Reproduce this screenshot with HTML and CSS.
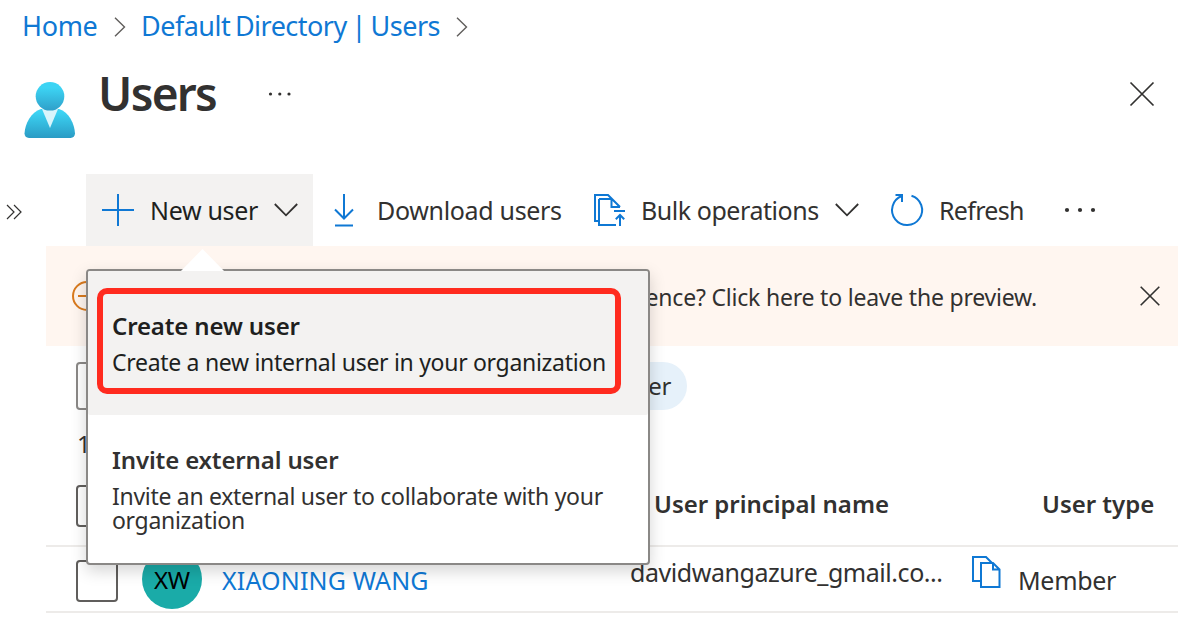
FILE: index.html
```html
<!DOCTYPE html>
<html lang="en">
<head>
<meta charset="utf-8">
<title>Users</title>
<link rel="stylesheet" href="styles.css">
</head>
<body>
<div class="page">
  <nav class="crumbs">
    <a class="crumb-home">Home</a>
    <svg class="crumb-sep" width="12" height="20" viewBox="0 0 12 20"><path d="M1 .7 10.500 10 1 19.300"/></svg>
    <a class="crumb-dir">Default Directory | Users</a>
    <svg class="crumb-sep" width="12" height="20" viewBox="0 0 12 20"><path d="M1 .7 10.500 10 1 19.300"/></svg>
  </nav>

  <header class="title-bar">
    <svg class="avatar-icon" width="52" height="57" viewBox="0 0 52 57">
      <defs>
        <linearGradient id="body" x1="0" y1="0" x2="0" y2="1"><stop offset=".1" stop-color="#3cd4f4"/><stop offset="1" stop-color="#2a9bc4"/></linearGradient>
        <linearGradient id="head" x1="0" y1="0" x2="0" y2="1"><stop offset=".2" stop-color="#3cd4f4"/><stop offset="1" stop-color="#2f9fc9"/></linearGradient>
      </defs>
      <path fill="url(#body)" d="M5 56Q.7 55.500 .5 51.500C1 42 7 30 17 27H35C45 30 50.500 42 51 51.500Q50.800 55.500 46.500 56Z"/>
      <path fill="#d8f5fc" d="M18 27h16l-8 19z"/>
      <circle cx="26" cy="14.300" r="14.300" fill="url(#head)"/>
    </svg>
    <h1>Users</h1>
    <svg class="title-more" width="24" height="6" viewBox="0 0 24 6"><circle cx="2.500" cy="3" r="1.600"/><circle cx="11.800" cy="3" r="1.600"/><circle cx="21" cy="3" r="1.600"/></svg>
    <svg class="close" width="26" height="26" viewBox="0 0 26 26"><path d="M1.500 1.500l23 23M24.500 1.500l-23 23"/></svg>
  </header>

  <div class="shell">
    <aside class="rail">
      <svg class="expand" width="17" height="16" viewBox="0 0 17 16"><path d="M1 1l7 7-7 7M8 1l7 7-7 7"/></svg>
    </aside>
    <main class="main">
      <div class="toolbar">
        <div class="tool tool-active">
          <svg class="blue" width="32" height="32" viewBox="0 0 32 32"><path d="M16 0v32M0 16h32"/></svg>
          <span class="label-new">New user</span>
          <svg class="chevron" width="24" height="14" viewBox="0 0 24 14"><path d="M.8 1 12 12.300 23.200 1"/></svg>
        </div>
        <div class="tool tool-download">
          <svg class="blue" width="20" height="33" viewBox="0 0 20 33"><path d="M10 0v25M1 15.500l9 9 9-9M1 31.500h18"/></svg>
          <span>Download users</span>
        </div>
        <div class="tool tool-bulk">
          <svg class="blue" width="32" height="32" viewBox="0 0 32 32"><path d="M5 27H1V1h13l3.500 3.500M5 5v26h17M5 5h12.500M17.500 4.500V13H26M17.500 4.500 26 13M20 17h11M26 32V21M21.800 25.200 26 21l4.200 4.200"/></svg>
          <span>Bulk operations</span>
          <svg class="chevron" width="24" height="14" viewBox="0 0 24 14"><path d="M.8 1 12 12.300 23.200 1"/></svg>
        </div>
        <div class="tool tool-refresh">
          <svg class="blue" width="32" height="32" viewBox="0 0 32 32"><path d="M20.500 1.700A15 15 0 1 1 10.800 2M4.500 1H11v7"/></svg>
          <span>Refresh</span>
        </div>
        <svg class="tool-more" width="32" height="6" viewBox="0 0 32 6"><circle cx="3" cy="3" r="2.100"/><circle cx="16" cy="3" r="2.100"/><circle cx="29" cy="3" r="2.100"/></svg>
      </div>

      <div class="banner">
        <svg class="banner-icon" width="30" height="30" viewBox="0 0 30 30"><circle cx="15" cy="15" r="14"/><path d="M6 15h18"/></svg>
        <span class="banner-text">experience? Click here to leave the preview.</span>
        <svg class="banner-close" width="20" height="20" viewBox="0 0 20 20"><path d="M.7.700l18.600 18.600M19.300.700.7 19.300"/></svg>
      </div>

      <div class="filters">
        <div class="search"></div>
        <div class="pill">Add filter</div>
      </div>
      <div class="count">1</div>

      <div class="row row-head">
        <i class="check"></i>
        <b class="head-upn">User principal name</b>
        <b class="head-type">User type</b>
      </div>
      <div class="row row-user">
        <i class="check"></i>
        <span class="avatar">XW</span>
        <a class="name">XIAONING WANG</a>
        <span class="upn">davidwangazure_gmail.co...</span>
        <svg class="copy blue" width="30" height="32" viewBox="0 0 30 32"><path d="M9 25H1V1h13l6 6M9 7h12l6.500 6.500V31H9zM21 7v6.500h6.500"/></svg>
        <span class="type">Member</span>
      </div>
    </main>
  </div>

  <div class="menu">
    <div class="menu-arrow"></div>
    <div class="menu-item menu-item-hover">
      <div class="menu-title">Create new user</div>
      <div class="menu-desc">Create a new internal user in your organization</div>
      <div class="highlight"></div>
    </div>
    <div class="menu-item">
      <div class="menu-title">Invite external user</div>
      <div class="menu-desc">Invite an external user to collaborate with your<br>organization</div>
    </div>
  </div>
</div>
</body>
</html>
```
FILE: styles.css
```css
* { box-sizing: border-box; letter-spacing: -0.013em; }
body { margin: 0; background: #fff; color: #323130; font: 25px/36px "Noto Sans", "Open Sans", sans-serif; }
svg { flex: none; display: block; overflow: visible; fill: none; }
a, span, b, h1 { white-space: nowrap; flex: none; }
b, h1 { font-weight: 600; }
.page { position: relative; width: 1178px; height: 634px; overflow: hidden; }

.crumbs { display: flex; align-items: center; height: 54px; padding-left: 22px; color: #0f78d4; font-size: 27px; }
.crumbs a { padding-bottom: 2px; }
.crumb-home { width: 92px; }
.crumb-dir { width: 315px; margin-left: 15px; letter-spacing: -0.019em; word-spacing: -1.8px; }
.crumb-sep { stroke: #605e5c; stroke-width: 1.4; }

.title-bar { display: flex; align-items: flex-start; height: 120px; padding: 0 23px 0 24px; }
.avatar-icon { margin-top: 28px; }
.title-bar h1 { width: 170px; margin: 7px 0 0 22px; font-size: 46px; line-height: 64px; letter-spacing: -0.037em; }
.title-more { margin-top: 37px; fill: #323130; }
.close { margin: 27px 0 0 auto; stroke: #323130; stroke-width: 1.7; }

.shell { display: flex; }
.rail { width: 46px; padding: 30px 0 0 6px; flex: none; }
.expand { stroke: #323130; stroke-width: 1.2; }
.main { flex: 1; min-width: 0; }
.toolbar { display: grid; grid-template-columns: 227px 261px 296px 175px 60px; height: 72px; padding-left: 40px; }
.tool { display: flex; align-items: center; gap: 16px; padding-right: 16px; }
.tool-active { background: #f3f2f1; color: #201f1e; padding-left: 16px; }
.tool-download { padding-left: 21px; gap: 23px; }
.tool-bulk { padding-left: 20px; padding-right: 11px; gap: 15px; }
.tool-bulk span { letter-spacing: -0.018em; }
.tool-refresh { padding-left: 21px; }
.tool-refresh span { letter-spacing: -0.028em; }
.blue { stroke: #0f78d4; stroke-width: 2; }
.chevron { margin-left: auto; stroke: #323130; stroke-width: 1.8; }
.tool-more { align-self: center; margin-left: 19px; fill: #323130; }

.banner { display: flex; align-items: center; height: 100px; padding: 0 18px 0 26px; background: #fff6f0; font-size: 23px; }
.banner-icon { stroke: #d97a1e; stroke-width: 2; }
.banner-text { margin-left: auto; padding-top: 2px; letter-spacing: -0.009em; }
.banner-close { margin-left: 103px; stroke: #323130; stroke-width: 1.6; }

.filters { display: flex; justify-content: space-between; padding: 16px 491px 0 30px; }
.search { width: 300px; height: 48px; border: 2px solid #8a8886; border-radius: 4px; }
.pill { height: 48px; padding: 0 16px; border-radius: 24px; background: #e6f1fa; font-size: 24px; line-height: 47px; }
.count { height: 57px; padding: 16px 0 0 31px; font-size: 24px; }
.row { display: flex; align-items: center; border-bottom: 2px solid #edebe9; padding-left: 30px; }
.row-head { height: 80px; }
.row-user { height: 66px; }
.check { flex: none; width: 42px; height: 42px; border: 2px solid #605e5c; border-radius: 4px; background: #fff; }
.row-user .check { margin-top: 4px; }
.row-head b { font-size: 24px; margin-bottom: 4px; letter-spacing: -0.001em; }
.head-upn { width: 388px; margin-left: 536px; }
.avatar { width: 60px; height: 60px; margin: 0 20px 0 24px; border-radius: 50%; background: #1aaba8; color: #000; text-align: center; line-height: 61px; font-size: 24px; }
.name { width: 408px; margin-top: 2px; color: #0f78d4; letter-spacing: 0.006em; }
.upn { width: 342px; margin-top: -14px; letter-spacing: -0.018em; }
.copy { margin-top: -14px; }
.type { margin: 2px 0 0 16px; }

.menu { position: absolute; left: 86px; top: 269px; width: 564px; height: 296px; border: 2px solid #8a8886; border-radius: 4px; background: #fff; box-shadow: 0 6px 16px rgba(0,0,0,.17); }
.menu-arrow { position: absolute; left: 91px; top: -22px; width: 47px; height: 24px; background: #fff; clip-path: polygon(50% 0, 100% 100%, 0 100%); }
.menu-item { position: relative; height: 144px; padding: 37px 24px 0; }
.menu-item-hover { background: #f3f2f1; color: #201f1e; border-radius: 2px; }
.menu-item + .menu-item { padding-top: 27px; }
.menu-title { font-size: 24px; font-weight: 600; height: 36px; white-space: nowrap; letter-spacing: -0.006em; }
.menu-desc { font-size: 23px; line-height: 24px; margin-top: 6px; white-space: nowrap; }
.highlight { position: absolute; left: 9px; top: 17px; width: 524px; height: 106px; border: 6px solid #ff2b1f; border-radius: 10px; }
```
